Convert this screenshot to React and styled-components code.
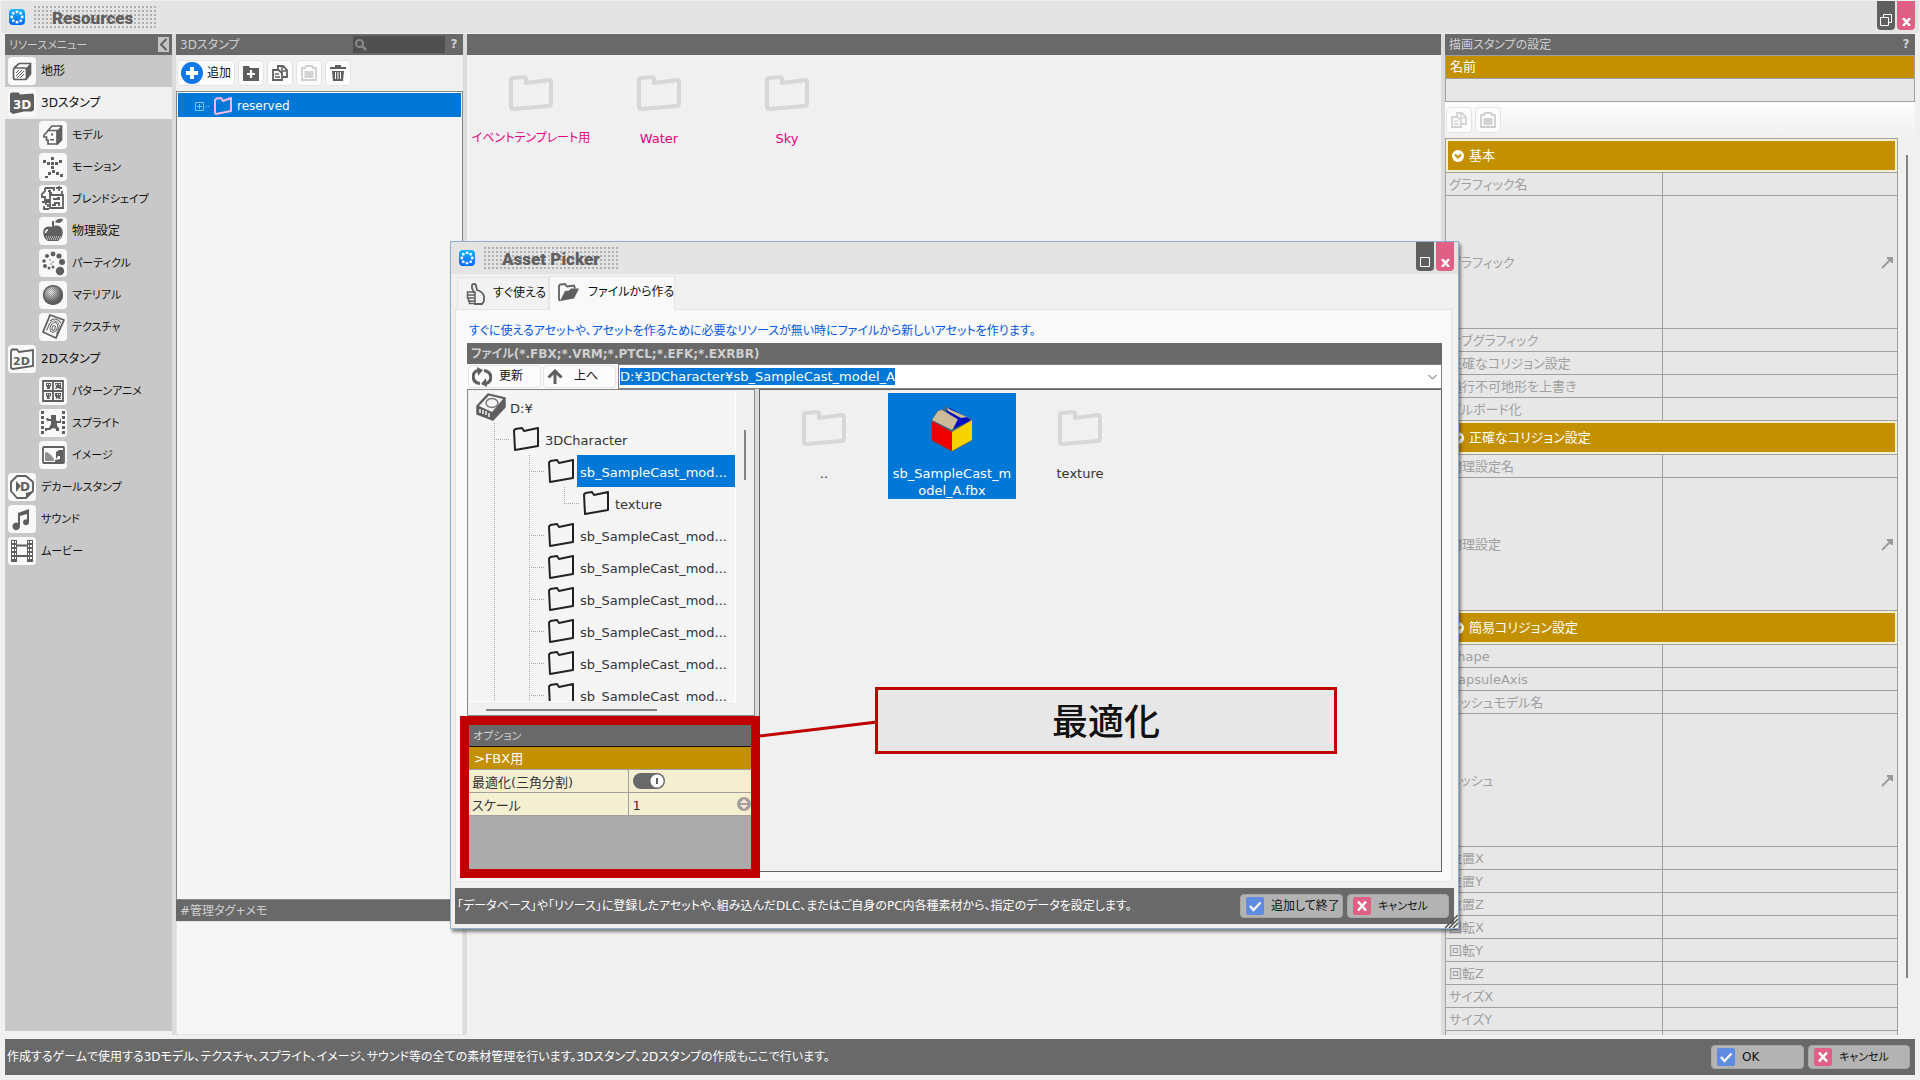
import React from 'react'
import styled, { createGlobalStyle } from 'styled-components'

const Globalstyle = createGlobalStyle`
    *{box-sizing:border-box;}
    body{margin:0;background:#f0f0f0;overflow:hidden;}
    body,button,input,table{
        font-family:"DejaVu Sans","Noto Sans CJK JP",sans-serif;
        font-size:12px;
        line-height:17px;
        font-feature-settings:"palt";
    }
    button{border:0;padding:0;color:inherit;background:none;white-space:nowrap;}
    input{border:0;padding:0;margin:0;outline:0;min-width:0;}
    svg{display:block;flex:none;}
`;

/* ---------- icons ---------- */
const DARK = '#5f5f5f'

const Applogo = () => (
    <svg width="16" height="16" viewBox="0 0 16 16">
        <defs>
            <linearGradient id="logo" x1="0" y1="0" x2="0" y2="1">
                <stop offset="0" stopColor="#12b4ff" />
                <stop offset="1" stopColor="#0068ff" />
            </linearGradient>
        </defs>
        <rect width="16" height="16" rx="4" fill="url(#logo)" />
        {[0, 45, 90, 135, 180, 225, 270, 315].map((a) => (
            <circle key={a} cx="8" cy="2.8" r="1.4" fill="#fff" transform={`rotate(${a} 8 8)`} />
        ))}
    </svg>
)

// every menu icon is drawn on a 28x28 tile
const menuIcons = {
    terrain: <>
        <path d="M6 11l5-4.500h11.500V17L18 22.500" fill="none" stroke={DARK} strokeWidth="1.700" />
        <path d="M18 11l4.500-4.500V17L18 22z" fill={DARK} />
        <rect x="5.500" y="11" width="13" height="11.500" rx="2" fill="#f9f9f9" stroke={DARK} strokeWidth="1.700" />
        <path d="M8 16l3-3M8 19l6-6M9 21l7-7M12 21l4-4" stroke={DARK} strokeWidth="1" />
    </>,
    stamp3d: <>
        <path d="M2 5l1.500-1.500h7L12 5.500 25 4.500l1 1.500v15l-2 1.500h-8L5 25l-3-2z" fill={DARK} />
        <text x="5" y="20" fontSize="12" fontWeight="bold" fill="#fff">3D</text>
    </>,
    model: <>
        <path d="M9 9.500L13 5h9.500v14L18 23.500" fill="none" stroke={DARK} strokeWidth="1.700" />
        <path d="M18 9.500L22.500 5v14L18 23.500z" fill={DARK} />
        <path d="M9 9.500h9V23H9v-4H7.500v-3H5v-2l3-3z" fill="#f9f9f9" stroke={DARK} strokeWidth="1.700" />
        <path d="M12 12.500h2v2h-2zM11 18h4v1.500h-4z" fill={DARK} />
    </>,
    motion: <path fill={DARK} d="M12 4h3v3h-3zM12 9h3v3h-3zM12 13h3v3h-3zM4 7h3v3H4zM8 9h3v3H8zM16 9h3v3h-3zM20 7h3v3h-3zM13 17h3v3h-3zM9 19h3v3H9zM6 23h3v2H6zM17 19h3v3h-3zM21 21h3v3h-3z" />,
    blend: <>
        <path d="M6 3h9v3M6 3v3L3 9v3h3v3h5M9 6h3M17 3h6M20 1v5M23 6v3M11 10h13v13H11zM14 14h7M15 18h5v3M11 17H7M3 17h4v3M5 21v3h5M9 19v3" fill="none" stroke={DARK} strokeWidth="1.800" />
        <path d="M10 7h3v2h-3zM18 12h3v3h-3zM13 19h4v2h-4z" fill={DARK} />
    </>,
    physics: <>
        <path d="M13 10V4h2v5c3-1 6-.500 8 3 2 4 0 10-4 12H9c-4-2-6-8-4-12 2-3 5-3 8-2z" fill={DARK} />
        <path d="M16 5c1-3 5-4 8-3-1 4-4 5-8 3z" fill={DARK} />
        <path d="M6.500 16c0-2 1-3 2.500-3" stroke="#fff" strokeWidth="1.500" fill="none" />
        <path d="M7 20h15M8 22h13" stroke="#f9f9f9" strokeWidth="1" strokeDasharray="1 1" />
    </>,
    particle: <>
        {[[14, 5, 2.4], [8, 7, 2], [20, 7, 2.6], [5, 12, 1.8], [23, 13, 3], [6, 17, 2], [10, 19, 1.5], [14, 18, 1.5], [21, 22, 4.2], [11, 11, .8], [14, 13, .8], [12, 15, .8]].map(([x, y, r]) => (
            <circle key={`${x}-${y}`} cx={x} cy={y} r={r} fill={DARK} />
        ))}
    </>,
    material: <>
        <defs>
            <radialGradient id="ball" cx=".4" cy=".35" r=".6">
                <stop offset="0" stopColor="#fff" />
                <stop offset=".3" stopColor="#c4c4c4" />
                <stop offset=".8" stopColor="#666" />
                <stop offset="1" stopColor="#555" />
            </radialGradient>
            <pattern id="dither" width="2" height="2" patternUnits="userSpaceOnUse">
                <path d="M0 0h1v1H0zM1 1h1v1H1z" fill={DARK} />
            </pattern>
        </defs>
        <circle cx="14" cy="14" r="10" fill="url(#ball)" />
        <circle cx="14" cy="14" r="9" fill="url(#dither)" opacity=".5" />
        <circle cx="14" cy="14" r="9.400" fill="none" stroke={DARK} strokeWidth="1.400" />
    </>,
    texture: <>
        <path d="M11 2l14 5-8 18L4 19z" fill="none" stroke={DARK} strokeWidth="1.800" strokeLinejoin="round" />
        <g fill="none" stroke={DARK} strokeWidth="1" transform="rotate(22 15 14)">
            <ellipse cx="15" cy="15" rx="1.500" ry="2.500" />
            <ellipse cx="15" cy="14.500" rx="3.500" ry="5" />
            <path d="M9.500 20v-6c0-8 10.500-8 10.500 0v6M9 10c2-5 8-5 11-2" />
        </g>
    </>,
    stamp2d: <>
        <path d="M3 6l1-1.500h5L11 7l14-2v16L5 24l-2-1z" fill="none" stroke={DARK} strokeWidth="1.800" />
        <text x="5" y="20" fontSize="11" fontWeight="bold" fill={DARK}>2D</text>
    </>,
    pattern: <>
        <path d="M4 4h20v20H4zM14 4v20M4 14h20" fill="none" stroke={DARK} strokeWidth="1.800" />
        <path fill={DARK} d="M7 6h5v3l-1 1v2H8v-2L7 9zM16 6h6v4l1 2h-2l-2-1-2 1h-1l1-2zM7 16h5v3l-2 1 1 2H8v-2l-1-1zM16 16h6v3l-1 1 1 2h-2l-1-1-2 1v-2l-1-1z" />
        <path fill="#f9f9f9" d="M8 7h1v1H8zM10 7h1v1h-1zM17 7h1v1h-1zM20 7h1v1h-1zM8 17h1v1H8zM10 17h1v1h-1zM18 17h1v1h-1zM20 17h1v1h-1z" />
    </>,
    sprite: <>
        <path d="M3.500 2v24M24.500 2v24" stroke={DARK} strokeWidth="3" strokeDasharray="3 2" />
        <path d="M12 6h5v5l1 1h3v-2h1v4h-4v3l2 2v3h-3v-2l-3-1-3 2H8v1H6v-3h4l2-4v-3H8l-1-3h2l1 1h2z" fill={DARK} />
    </>,
    image: <>
        <rect x="4" y="6" width="21" height="16" rx="1" fill="none" stroke={DARK} strokeWidth="1.800" />
        <path d="M6 20v-8l2-1 4 3 3 4v2z" fill="#909090" />
        <path d="M17 18v-7l3-2h4v12h-8v-2l5-1v-3h-2z" fill={DARK} />
    </>,
    decal: <>
        <path d="M9 3h9l7 6v9l-7 7H9l-6-7V9z" fill="none" stroke={DARK} strokeWidth="1.900" strokeLinejoin="round" />
        <path d="M8 8l5 5-5 6zM18 25v-5l7-2z" fill={DARK} />
        <text x="12" y="18" fontSize="12" fontWeight="bold" fill={DARK}>D</text>
    </>,
    sound: <path fill={DARK} d="M10 8l11-4v13a3 3 0 1 1-2-2.500V9l-7 2v10a3.800 3.800 0 1 1-2-3z" />,
    movie: <>
        <path d="M3 3h6v22H3zM19 3h6v22h-6z" fill={DARK} />
        <path d="M9 8.500h10M9 19h10" stroke={DARK} strokeWidth="1.800" />
        <path d="M5 4v20M23 4v20" stroke="#f9f9f9" strokeWidth="2" strokeDasharray="2 2" />
        <path d="M7.500 4v20M20.500 4v20" stroke="#f9f9f9" strokeWidth="1" strokeDasharray="2 2" />
    </>,
}

const Bigfolder = () => (
    <svg width="44" height="38" viewBox="0 0 44 38">
        <path d="M2 4.500Q2 3 4 3l10-1q3 0 3 2v4l23-3q2 0 2 2v21q0 3-3 3L5 34q-3 0-3-2z" fill="none" stroke="#d7d7d7" strokeWidth="4" strokeLinejoin="round" />
    </svg>
)

const Treefolder = () => (
    <svg width="26" height="24" viewBox="0 0 26 24">
        <path d="M1 3.500L2.500 2 9 1l2 3 14-3v18L2 23z" fill="none" stroke="#222" strokeWidth="2" strokeLinejoin="round" />
    </svg>
)

const Pinkfolder = () => (
    <svg width="18" height="18" viewBox="0 0 18 18">
        <path d="M1 3l1.500-1.500L7 1l2 3 8-3v13L2 17l-1-1z" fill="none" stroke="#ffb9dc" strokeWidth="2" strokeLinejoin="round" />
    </svg>
)

const Drive = () => (
    <svg width="30" height="30" viewBox="0 0 30 30">
        <path d="M1 14L12 2l17 4v9L17 28 1 22z" fill={DARK} stroke={DARK} strokeWidth="1.500" strokeLinejoin="round" />
        <path d="M3 14L13 3.500 27 7 16 20z" fill="#f5f5f5" />
        <ellipse cx="16" cy="11" rx="6" ry="4.500" fill="none" stroke="#777" strokeWidth="1.400" />
        <path d="M4 17v4M7 18v4M10 19v4M13 21v4" stroke="#f5f5f5" strokeWidth="1.500" />
    </svg>
)

const Boxicon = () => (
    <svg width="44" height="48" viewBox="0 0 44 48">
        <path d="M1 16L8 5l7-1-1-3 28 13v22L22 47 1 36z" fill="#44617e" />
        <path d="M16 6l4-3 21 12-12 4z" fill="#0010c0" />
        <path d="M17 3l20 9-6 1-13-7z" fill="#cbbb98" />
        <path d="M2 15L8 6l4-1 17 10-7 10z" fill="#cbbb98" />
        <path d="M2 16l20 11v19L2 35z" fill="#f00000" />
        <path d="M22 27l20-12v20L22 46z" fill="#f8d200" />
        <path d="M28 14l12 2-17 8z" fill="#0010c0" />
    </svg>
)

const Copyicon = ({ color }) => (
    <svg width="16" height="16" viewBox="0 0 16 16">
        <path d="M6 4V1h5l4 4v7h-4" fill="none" stroke={color} strokeWidth="1.800" />
        <path d="M1 5h5.500L10 8v7H1z" fill="#fcfcfc" stroke={color} strokeWidth="1.800" />
        <path d="M3 9h4M3 12h5M10 1v5h4" stroke={color} strokeWidth="1.500" fill="none" />
    </svg>
)

const Pasteicon = () => (
    <svg width="16" height="16" viewBox="0 0 16 16">
        <path d="M1 3h3l1-2h6l1 2h3v12H1z" fill="none" stroke="#cfcfcf" strokeWidth="1.800" />
        <path d="M3.500 6h9v7h-9z" fill="#d3d3d3" />
    </svg>
)

const Newfoldericon = () => (
    <svg width="16" height="16" viewBox="0 0 16 16">
        <path d="M0 1h6l1 2h9v13H0z" fill={DARK} />
        <path d="M8 5v8M4 9h8" stroke="#fff" strokeWidth="2.200" />
    </svg>
)

const Trashicon = () => (
    <svg width="16" height="16" viewBox="0 0 16 16">
        <path d="M0 2h5V0h6v2h5v2H0zM2 6h12l-1 10H3z" fill={DARK} />
        <path d="M5.500 7v7M8 7v7M10.500 7v7" stroke="#f9f9f9" strokeWidth="1" />
    </svg>
)

const Plusicon = () => (
    <svg width="22" height="22" viewBox="0 0 22 22">
        <circle cx="11" cy="11" r="11" fill="#0f78e8" />
        <path d="M11 5v12M5 11h12" stroke="#fff" strokeWidth="4" />
    </svg>
)

const Thumbicon = () => (
    <svg width="19" height="22" viewBox="0 0 19 22">
        <path d="M8 10L6 5V2.500Q6 1 8 1t2 2l1 4q6 2 7 6v5l-2 3H8" fill="none" stroke={DARK} strokeWidth="1.800" />
        <path d="M1.500 9H9v3H1.500zM1.500 12H9v3H1.500zM2.500 15H9v3H2.500zM3.500 18H9v2.500H3.500z" fill="none" stroke={DARK} strokeWidth="1.500" />
    </svg>
)

const Openfolder = () => (
    <svg width="22" height="19" viewBox="0 0 22 19">
        <path d="M2 18L1 16V3l1-1.500L7 1l2 2.500 7-1 1 3" fill="none" stroke={DARK} strokeWidth="1.800" />
        <path d="M2 18L7 8l4-.500 2-2h8l-5 10z" fill={DARK} />
    </svg>
)

const Refreshicon = () => (
    <svg width="20" height="20" viewBox="0 0 20 20">
        <path d="M8 16.500C-1 15-.500 5 6 3.500M12 3.500c9 1.500 8.500 11.500 2 13" fill="none" stroke={DARK} strokeWidth="3.200" />
        <path d="M5 0l6 3-5 6zM15 20l-6-3 5-6z" fill={DARK} />
    </svg>
)

const Upicon = () => (
    <svg width="16" height="16" viewBox="0 0 16 16">
        <path d="M8 15V3M1.500 8.500L8 2l6.500 6.500" fill="none" stroke={DARK} strokeWidth="3" />
    </svg>
)

const Arrowicon = () => (
    <svg width="13" height="13" viewBox="0 0 13 13">
        <path d="M1 12L11 2" stroke="#999" strokeWidth="1.800" />
        <path d="M6 1h6v6h-1.500L6 2.500z" fill="#999" />
    </svg>
)

const Foldmark = () => (
    <svg width="12" height="12" viewBox="0 0 12 12">
        <circle cx="6" cy="6" r="6" fill="#fff" />
        <path d="M3 4.500l3 3 3-3" fill="none" stroke="#c39000" strokeWidth="2" />
    </svg>
)

const Checkicon = () => (
    <svg width="18" height="18" viewBox="0 0 18 18">
        <rect width="18" height="18" rx="2" fill="#5f8ce0" />
        <path d="M4 9l3.500 4L14.500 5.500" fill="none" stroke="#fff" strokeWidth="2.200" />
    </svg>
)

const Crossicon = () => (
    <svg width="18" height="18" viewBox="0 0 18 18">
        <rect width="18" height="18" rx="2" fill="#e06085" />
        <path d="M5 4.500l8 9M13 4.500l-8 9" fill="none" stroke="#fff" strokeWidth="2.600" />
    </svg>
)

/* ---------- shared parts ---------- */
const Titlebar = styled.header`
    display:flex;
    flex:none;
    align-items:flex-start;
    height:32px;
    padding:0 4px 0 8px;
    background:#e4e4e4;
    > svg{margin-top:8px;}
`;

const Title = styled.h1`
    margin:5px auto 0 9px;
    width:${(p) => p.$width}px;
    padding-left:18px;
    height:22px;
    font:900 17px/24px Roboto,sans-serif;
    white-space:nowrap;
    color:#5f5f5f;
    background:
        linear-gradient(90deg,transparent 2px,#e4e4e4 2px) 0 0/4px 4px,
        linear-gradient(transparent 2px,#e4e4e4 2px) 0 0/4px 4px,
        #b0b0b0;
`;

const Windowbutton = styled.button`
    display:flex;
    align-items:flex-end;
    justify-content:center;
    width:18px;
    height:29px;
    padding-bottom:4px;
    margin-left:2px;
    border-radius:0 0 4px 4px;
    background:${(p) => (p.$close ? '#e06085' : '#5f5f5f')};
`;

const Captionbar = styled.div`
    display:flex;
    flex:none;
    align-items:center;
    height:21px;
    padding:0 3px 0 4px;
    color:#cfcfcf;
    background:#696969;
    font-weight:${(p) => (p.$bold ? 'bold' : 'normal')};
    h2{margin:0 auto 0 0;padding-top:2px;font-size:${(p) => (p.$kana ? 11 : 12)}px;font-weight:inherit;}
`;

const Helpbutton = styled.button`
    width:12px;
    font-weight:bold;
`;

const Toolbutton = styled.button`
    display:flex;
    align-items:center;
    justify-content:${(p) => (p.$width ? 'flex-start' : 'center')};
    gap:${(p) => p.$gap || 0}px;
    width:${(p) => p.$width || 26}px;
    height:${(p) => p.$height || 26}px;
    padding-left:${(p) => (p.$width ? 3 : 0)}px;
    border:1px solid #e4e4e4;
    border-radius:4px;
    color:#111;
    background:#fcfcfc;
`;

const Statusbar = styled.footer`
    display:flex;
    flex:none;
    align-items:center;
    gap:4px;
    height:36px;
    margin:${(p) => p.$margin};
    padding:0 5px 0 2px;
    color:#fff;
    background:#696969;
    p{margin:0 auto 0 0;}
`;

const Actionbutton = styled.button`
    display:flex;
    align-items:center;
    gap:7px;
    width:${(p) => p.$width}px;
    height:24px;
    padding-left:5px;
    border-radius:4px;
    border:1px solid #a6a6a6;
    font-size:${(p) => (p.$kana ? 11 : 12)}px;
    color:#111;
    background:#b3b3b3;
`;

/* ---------- main window ---------- */
const Window = styled.div`
    display:flex;
    flex-direction:column;
    height:100vh;
    padding:1px 1px 0;
`;

const Columns = styled.main`
    display:grid;
    grid-template-columns:167px 287px minmax(0,1fr) 470px;
    gap:4px;
    flex:1;
    min-height:0;
    margin:1px 4px 4px;
    background:linear-gradient(90deg,transparent 167px,#dcdcdc 167px calc(100% - 470px),transparent 0);
    > *{display:flex;flex-direction:column;min-width:0;min-height:0;background:#f0f0f0;}
`;

const Menu = styled.nav`
    && {background:#c8c8c8;}
    margin-bottom:4px;
    ul{margin:0;padding:0;list-style:none;}
`;

const Menuitem = styled.li`
    display:flex;
    align-items:center;
    gap:5px;
    height:32px;
    padding-left:${(p) => (p.$sub ? 34 : 3)}px;
    font-size:${(p) => (p.$kana ? 11 : 12)}px;
    color:#111;
    background:${(p) => (p.$active ? '#f0f0f0' : 'transparent')};
    > svg{border-radius:4px;background:#f9f9f9;}
`;

const Collapsebutton = styled.button`
    display:flex;
    align-items:center;
    justify-content:center;
    width:11px;
    height:15px;
    background:#c4c4c4;
`;

const Searchbox = styled.label`
    display:flex;
    align-items:center;
    width:92px;
    height:17px;
    margin-right:3px;
    padding-left:2px;
    background:#505050;
    input{width:76px;background:transparent;color:#ccc;}
`;

const Toolbar = styled.div`
    display:flex;
    flex:none;
    align-items:${(p) => (p.$top ? 'flex-start' : 'center')};
    gap:3px;
    height:36px;
    padding:${(p) => (p.$top ? '5px 1px' : '0 1px')};
    background:${(p) => (p.$top ? 'linear-gradient(#fdfdfd,#f0f0f0)' : 'transparent')};
`;

const Stamptree = styled.div`
    flex:1;
    padding:1px;
    border:1px solid #828790;
    background:#f5f5f5;
`;

const Stamprow = styled.div`
    display:flex;
    align-items:center;
    height:24px;
    padding:2px 0 0 17px;
    gap:5px;
    color:#fff;
    background:#0078d7;
`;

const Memo = styled.div`
    flex:none;
    height:114px;
    border:1px solid #e4e4e4;
    background:#f6f6f6;
`;

const Filegrid = styled.div`
    display:flex;
    align-items:flex-start;
    padding-top:3px;
`;

const Filecell = styled.figure`
    width:128px;
    height:106px;
    margin:0;
    color:${(p) => (p.$selected ? '#fff' : p.$color)};
    background:${(p) => (p.$selected ? '#0078d7' : 'transparent')};
    div{display:flex;align-items:center;justify-content:center;height:72px;}
    figcaption{
        padding:0 3px;
        text-align:center;
        font-size:${(p) => p.$size}px;
        word-break:break-all;
    }
`;

const Proptable = styled.table`
    width:100%;
    table-layout:fixed;
    border-collapse:collapse;
    font-size:13px;
    color:#a0a0a0;
    background:#e7e7e7;
    th,td{padding:0 3px;border:1px solid #a0a0a0;text-align:left;font-weight:normal;}
    td input{display:block;width:100%;background:transparent;}
    td svg{margin-left:auto;}
`;

const Proprow = styled.tr`
    height:${(p) => (p.$tall ? 133 : 23)}px;
`;

const Sectionrow = styled.tr`
    height:${(p) => (p.$slim ? 23 : 34)}px;
    th{
        padding:${(p) => (p.$slim ? '0 4px 2px' : '2px')};
        color:#fff;
        background:${(p) => (p.$slim ? '#c39000' : '#f5efd2')};
    }
    th > div{
        display:flex;
        align-items:center;
        gap:5px;
        height:29px;
        padding-left:4px;
        background:#c39000;
    }
`;

const Proparea = styled.div`
    display:grid;
    grid-template-columns:453px 1fr;
    flex:1;
    min-height:0;
    overflow:hidden;
`;

const Scrollthumb = styled.span`
    display:block;
    width:${(p) => p.$width}px;
    height:${(p) => p.$height}px;
    margin:${(p) => p.$margin};
    background:#848484;
`;

/* ---------- asset picker ---------- */
const Dialog = styled.section`
    position:absolute;
    top:241px;
    right:461px;
    bottom:151px;
    left:450px;
    display:flex;
    flex-direction:column;
    border:1px solid #8fb0d2;
    background:#f0f0f0;
    box-shadow:2px 3px 3px rgba(0,0,0,.450);
`;

const Tabstrip = styled.div`
    display:flex;
    flex:none;
    align-items:flex-end;
    height:35px;
    padding-left:6px;
`;

const Tab = styled.button`
    display:flex;
    align-items:center;
    gap:8px;
    width:${(p) => (p.$active ? 126 : 92)}px;
    height:${(p) => (p.$active ? 34 : 32)}px;
    padding:0 0 ${(p) => (p.$active ? 2 : 0)}px 8px;
    margin-bottom:${(p) => (p.$active ? -1 : 0)}px;
    z-index:1;
    border:1px solid #e4e4e4;
    border-bottom:0;
    color:#111;
    background:${(p) => (p.$active ? '#f9f9f9' : '#f2f2f2')};
`;

const Tabpage = styled.div`
    display:flex;
    flex-direction:column;
    flex:1;
    min-height:0;
    margin:0 6px 6px 4px;
    padding:0 9px 9px 11px;
    border:1px solid #e4e4e4;
    background:#f9f9f9;
`;

const Notice = styled.p`
    flex:none;
    height:33px;
    margin:0;
    padding:13px 2px 0;
    color:#0057e6;
`;

const Pathbar = styled.div`
    display:flex;
    flex:none;
    align-items:center;
    gap:2px;
    height:25px;
    padding-left:1px;
`;

const Pathbox = styled.label`
    display:flex;
    flex:1;
    align-items:center;
    justify-content:space-between;
    height:25px;
    padding:0 4px 0 1px;
    border:1px solid #828282;
    background:#fff;
    input{field-sizing:content;height:17px;font-size:13px;color:#fff;background:#0078d7;}
`;

const Split = styled.div`
    display:grid;
    grid-template-columns:288px minmax(0,1fr);
    gap:4px;
    flex:1;
    min-height:0;
    background:#dcdcdc;
`;

const Leftpane = styled.div`
    display:flex;
    flex-direction:column;
    min-height:0;
`;

const Treebox = styled.div`
    display:grid;
    grid-template-columns:minmax(0,1fr) 18px;
    grid-template-rows:minmax(0,1fr) 13px;
    flex:1;
    min-height:0;
    padding:1px 0 0 1px;
    border:1px solid #828790;
    background:#f0f0f0;
`;

const Treelist = styled.ul`
    margin:0;
    padding:0;
    overflow:hidden;
    list-style:none;
    font-size:13px;
    color:#333;
    border:solid #fff;
    border-width:0 1px 1px 0;
    background:#f5f5f5;
`;

const Treerow = styled.li`
    display:flex;
    align-items:center;
    height:32px;
    padding-left:${(p) => (p.$root ? 7 : 25)}px;
    > span:last-child{
        display:flex;
        flex:1;
        align-items:center;
        align-self:stretch;
        padding:2px 0 0 ${(p) => (p.$root ? 4 : 3)}px;
        margin-left:${(p) => (p.$root ? 0 : 3)}px;
        white-space:nowrap;
        color:${(p) => (p.$selected ? '#fff' : 'inherit')};
        background:${(p) => (p.$selected ? '#0078d7' : 'transparent')};
    }
`;

const Guide = styled.i`
    align-self:stretch;
    width:${(p) => (p.$branch ? 19 : 35)}px;
    background-repeat:no-repeat;
    background-image:
        repeating-linear-gradient(#a8a8a8 0 1px,transparent 1px 2px),
        repeating-linear-gradient(90deg,#a8a8a8 0 1px,transparent 1px 2px);
    background-position:0 0,0 16px;
    background-size:1px ${(p) => (p.$last ? '16px' : '100%')},${(p) => (p.$branch ? '15px 1px' : '0 0')};
`;

const Options = styled.div`
    position:relative;
    flex:none;
    height:144px;
    margin:9px 4px 3px 2px;
    background:#ababab;
    &::after{
        content:'';
        position:absolute;
        inset:-9px;
        border:9px solid #c00000;
        pointer-events:none;
    }
`;

const Optiontable = styled.table`
    width:100%;
    table-layout:fixed;
    border-collapse:collapse;
    border-top:1px solid #111;
    font-size:13px;
    color:#333;
    background:#f5efd2;
    tr{height:23px;}
    tbody th{padding:2px 3px 0;border-bottom:1px solid #a0a0a0;text-align:left;font-weight:normal;}
    td{padding:0 0 0 4px;border-bottom:1px solid #a0a0a0;border-left:1px solid #a0a0a0;}
    thead th{padding:0 5px;text-align:left;font-weight:normal;color:#fff;background:#c39000;border-bottom:1px solid #a0a0a0;}
    td > div{display:flex;align-items:center;justify-content:space-between;}
    input[type=text]{width:80px;padding-top:2px;background:transparent;color:#333;font-size:13px;}
`;

const Toggle = styled.input`
    appearance:none;
    display:block;
    width:32px;
    height:16px;
    border-radius:8px;
    background:
        linear-gradient(#5f5f5f,#5f5f5f) 23px 5px/2px 6px no-repeat,
        radial-gradient(circle at 24px 8px,#fff 6px,#696969 7px);
`;

const Filelist = styled.div`
    border:1px solid #646464;
    background:#f0f0f0;
`;

const Callout = styled.aside`
    position:absolute;
    top:445px;
    right:121px;
    left:424px;
    display:flex;
    align-items:center;
    justify-content:center;
    height:67px;
    padding-top:3px;
    border:3px solid #c00000;
    font-size:36px;
    font-weight:500;
    color:#111;
    background:#e7e7e7;
`;

const Leader = styled.svg`
    position:absolute;
    top:475px;
    left:309px;
`;

const Grip = styled.svg`
    position:absolute;
    right:0;
    bottom:0;
`;

const menu = [
    { icon: 'terrain', label: '地形' },
    { icon: 'stamp3d', label: '3Dスタンプ', active: true },
    { icon: 'model', label: 'モデル', sub: true, kana: true },
    { icon: 'motion', label: 'モーション', sub: true, kana: true },
    { icon: 'blend', label: 'ブレンドシェイプ', sub: true, kana: true },
    { icon: 'physics', label: '物理設定', sub: true },
    { icon: 'particle', label: 'パーティクル', sub: true, kana: true },
    { icon: 'material', label: 'マテリアル', sub: true, kana: true },
    { icon: 'texture', label: 'テクスチャ', sub: true, kana: true },
    { icon: 'stamp2d', label: '2Dスタンプ' },
    { icon: 'pattern', label: 'パターンアニメ', sub: true, kana: true },
    { icon: 'sprite', label: 'スプライト', sub: true, kana: true },
    { icon: 'image', label: 'イメージ', sub: true, kana: true },
    { icon: 'decal', label: 'デカールスタンプ', kana: true },
    { icon: 'sound', label: 'サウンド', kana: true },
    { icon: 'movie', label: 'ムービー', kana: true },
]

const folders = [
    { name: 'イベントテンプレート用', size: 12 },
    { name: 'Water', size: 13 },
    { name: 'Sky', size: 13 },
]

const sections = [
    { title: '基本', rows: ['グラフィック名', '*グラフィック', 'サブグラフィック', '正確なコリジョン設定', '通行不可地形を上書き', 'ビルボード化'] },
    { title: '正確なコリジョン設定', rows: ['物理設定名', '*物理設定'] },
    { title: '簡易コリジョン設定', rows: ['Shape', 'CapsuleAxis', 'メッシュモデル名', '*メッシュ', '位置X', '位置Y', '位置Z', '回転X', '回転Y', '回転Z', 'サイズX', 'サイズY', ''] },
]

const CAST = 'sb_SampleCast_mod...'
const tree = [
    { label: 'D:¥', depth: 0 },
    { label: '3DCharacter', depth: 1 },
    { label: CAST, depth: 2, selected: true },
    { label: 'texture', depth: 3, last: true },
    ...Array.from({ length: 6 }, () => ({ label: CAST, depth: 2 })),
]

const Sidemenu = () => (
    <Menu>
        <Captionbar $kana>
            <h2>リソースメニュー</h2>
            <Collapsebutton aria-label="collapse">
                <svg width="9" height="13" viewBox="0 0 9 13"><path d="M7.500 1L2 6.500 7.500 12" fill="none" stroke="#5f5f5f" strokeWidth="2" /></svg>
            </Collapsebutton>
        </Captionbar>
        <ul>
            {menu.map((m) => (
                <Menuitem key={m.icon} $sub={m.sub} $active={m.active} $kana={m.kana}>
                    <svg width="28" height="28" viewBox="0 0 28 28">{menuIcons[m.icon]}</svg>
                    {m.label}
                </Menuitem>
            ))}
        </ul>
    </Menu>
)

const Stamppanel = () => (
    <section>
        <Captionbar>
            <h2>3Dスタンプ</h2>
            <Searchbox>
                <svg width="12" height="12" viewBox="0 0 12 12">
                    <circle cx="4.500" cy="4.500" r="3.500" fill="none" stroke="#8a8a8a" strokeWidth="2" />
                    <path d="M7 7l4 4" stroke="#8a8a8a" strokeWidth="2.500" />
                </svg>
                <input type="text" aria-label="search" />
            </Searchbox>
            <Helpbutton>?</Helpbutton>
        </Captionbar>
        <Toolbar>
            <Toolbutton $width={58} $gap={4}><Plusicon />追加</Toolbutton>
            <Toolbutton aria-label="new folder"><Newfoldericon /></Toolbutton>
            <Toolbutton aria-label="copy"><Copyicon color={DARK} /></Toolbutton>
            <Toolbutton aria-label="paste"><Pasteicon /></Toolbutton>
            <Toolbutton aria-label="delete"><Trashicon /></Toolbutton>
        </Toolbar>
        <Stamptree>
            <Stamprow>
                <svg width="14" height="9" viewBox="0 0 14 9">
                    <path d="M.5.5h8v8h-8zM2 4.500h5M4.500 2v5M11 4.500h1M13 4.500h1" fill="none" stroke="#8fbfe8" />
                </svg>
                <Pinkfolder />
                reserved
            </Stamprow>
        </Stamptree>
        <Captionbar><h2>#管理タグ+メモ</h2></Captionbar>
        <Memo />
    </section>
)

const Properties = () => (
    <section>
        <Captionbar>
            <h2>描画スタンプの設定</h2>
            <Helpbutton>?</Helpbutton>
        </Captionbar>
        <Proptable>
            <tbody>
                <Sectionrow $slim><th><label htmlFor="name">名前</label></th></Sectionrow>
                <Proprow><td><input id="name" type="text" /></td></Proprow>
            </tbody>
        </Proptable>
        <Toolbar $top>
            <Toolbutton aria-label="copy"><Copyicon color="#d3d3d3" /></Toolbutton>
            <Toolbutton aria-label="paste"><Pasteicon /></Toolbutton>
        </Toolbar>
        <Proparea>
            <Proptable>
                <colgroup><col width="217" /><col /></colgroup>
                {sections.map((s) => (
                    <tbody key={s.title}>
                        <Sectionrow><th colSpan="2"><div><Foldmark />{s.title}</div></th></Sectionrow>
                        {s.rows.map((r) => {
                            const tall = r.startsWith('*')
                            return (
                                <Proprow key={r} $tall={tall}>
                                    <th>{r.replace('*', '')}</th>
                                    <td>{tall && <Arrowicon />}</td>
                                </Proprow>
                            )
                        })}
                    </tbody>
                ))}
            </Proptable>
            <Scrollthumb $width={2} $height={823} $margin="17px 0 0 8px" />
        </Proparea>
    </section>
)

const Filetree = () => (
    <Treebox>
        <Treelist>
            {tree.map((t, i) => (
                <Treerow key={`tree${i}`} $root={t.depth === 0} $selected={t.selected}>
                    {Array.from({ length: t.depth }, (_, d) => (
                        <Guide key={d} $branch={d === t.depth - 1} $last={t.last && d === t.depth - 1} />
                    ))}
                    {t.depth === 0 ? <Drive /> : <Treefolder />}
                    <span>{t.label}</span>
                </Treerow>
            ))}
        </Treelist>
        <Scrollthumb $width={2} $height={50} $margin="39px 0 0 8px" />
        <Scrollthumb $width={171} $height={2} $margin="7px 0 0 17px" />
    </Treebox>
)

const Optionpanel = () => (
    <Options>
        <Captionbar $kana><h2>オプション</h2></Captionbar>
        <Optiontable>
            <colgroup><col width="159" /><col /></colgroup>
            <thead><tr><th colSpan="2">&gt;FBX用</th></tr></thead>
            <tbody>
                <tr>
                    <th><label htmlFor="optimize">最適化(三角分割)</label></th>
                    <td><Toggle id="optimize" type="checkbox" defaultChecked /></td>
                </tr>
                <tr>
                    <th><label htmlFor="scale">スケール</label></th>
                    <td>
                        <div>
                            <input id="scale" type="text" defaultValue="1" />
                            <svg width="14" height="14" viewBox="0 0 14 14">
                                <circle cx="7" cy="7" r="7" fill="#a0a0a0" />
                                <path d="M7 2l4 4H3zM7 12l4-4H3z" fill="#f5efd2" />
                            </svg>
                        </div>
                    </td>
                </tr>
            </tbody>
        </Optiontable>
    </Options>
)

const Assetpicker = () => (
    <Dialog role="dialog">
        <Titlebar>
            <Applogo />
            <Title $width={134}>Asset Picker</Title>
            <Windowbutton aria-label="maximize">
                <svg width="10" height="10" viewBox="0 0 10 10"><path d="M.5.5h9v9h-9z" fill="none" stroke="#fff" /></svg>
            </Windowbutton>
            <Windowbutton $close aria-label="close">
                <svg width="9" height="8" viewBox="0 0 9 8"><path d="M1 0l7 8M8 0L1 8" stroke="#fff" strokeWidth="2.400" /></svg>
            </Windowbutton>
        </Titlebar>
        <Tabstrip>
            <Tab><Thumbicon />すぐ使える</Tab>
            <Tab $active><Openfolder />ファイルから作る</Tab>
        </Tabstrip>
        <Tabpage>
            <Notice>すぐに使えるアセットや、アセットを作るために必要なリソースが無い時にファイルから新しいアセットを作ります。</Notice>
            <Captionbar $bold><h2>ファイル(*.FBX;*.VRM;*.PTCL;*.EFK;*.EXRBR)</h2></Captionbar>
            <Pathbar>
                <Toolbutton $width={73} $height={23} $gap={7}><Refreshicon />更新</Toolbutton>
                <Toolbutton $width={73} $height={23} $gap={11}><Upicon />上へ</Toolbutton>
                <Pathbox>
                    <input type="text" aria-label="path" defaultValue="D:¥3DCharacter¥sb_SampleCast_model_A" />
                    <svg width="9" height="6" viewBox="0 0 9 6"><path d="M.5 1l4 4 4-4" fill="none" stroke="#555" /></svg>
                </Pathbox>
            </Pathbar>
            <Split>
                <Leftpane>
                    <Filetree />
                    <Optionpanel />
                </Leftpane>
                <Filelist>
                    <Filegrid>
                        <Filecell $size={13} $color="#333"><div><Bigfolder /></div><figcaption>..</figcaption></Filecell>
                        <Filecell $size={13} $selected><div><Boxicon /></div><figcaption>sb_SampleCast_model_A.fbx</figcaption></Filecell>
                        <Filecell $size={13} $color="#333"><div><Bigfolder /></div><figcaption>texture</figcaption></Filecell>
                    </Filegrid>
                </Filelist>
            </Split>
        </Tabpage>
        <Statusbar $margin="0 4px 4px">
            <p>「データベース」や「リソース」に登録したアセットや、組み込んだDLC、またはご自身のPC内各種素材から、指定のデータを設定します。</p>
            <Actionbutton $width={103}><Checkicon />追加して終了</Actionbutton>
            <Actionbutton $width={102} $kana><Crossicon />キャンセル</Actionbutton>
        </Statusbar>
        <Leader width="118" height="24" viewBox="0 0 118 24"><path d="M0 19L117 5" stroke="#c00000" strokeWidth="3" /></Leader>
        <Callout>最適化</Callout>
        <Grip width="13" height="13" viewBox="0 0 13 13">
            <path d="M0 13L13 0M4 13l9-9M8 13l5-5" stroke="#555" strokeWidth="1.500" />
        </Grip>
    </Dialog>
)

const App = () => (
    <Window>
        <Globalstyle />
        <Titlebar>
            <Applogo />
            <Title $width={122}>Resources</Title>
            <Windowbutton aria-label="restore">
                <svg width="12" height="12" viewBox="0 0 12 12"><path d="M.5 3.500h8v8h-8zM3.500 3.500v-3h8v8h-3" fill="none" stroke="#fff" /></svg>
            </Windowbutton>
            <Windowbutton $close aria-label="close">
                <svg width="9" height="8" viewBox="0 0 9 8"><path d="M1 0l7 8M8 0L1 8" stroke="#fff" strokeWidth="2.400" /></svg>
            </Windowbutton>
        </Titlebar>
        <Columns>
            <Sidemenu />
            <Stamppanel />
            <section>
                <Captionbar />
                <Filegrid>
                    {folders.map((f) => (
                        <Filecell key={f.name} $size={f.size} $color="#e6007e"><div><Bigfolder /></div><figcaption>{f.name}</figcaption></Filecell>
                    ))}
                </Filegrid>
            </section>
            <Properties />
        </Columns>
        <Statusbar $margin="0 4px 5px">
            <p>作成するゲームで使用する3Dモデル、テクスチャ、スプライト、イメージ、サウンド等の全ての素材管理を行います。3Dスタンプ、2Dスタンプの作成もここで行います。</p>
            <Actionbutton $width={93}><Checkicon />OK</Actionbutton>
            <Actionbutton $width={102} $kana><Crossicon />キャンセル</Actionbutton>
        </Statusbar>
        <Assetpicker />
    </Window>
)

export default App;
